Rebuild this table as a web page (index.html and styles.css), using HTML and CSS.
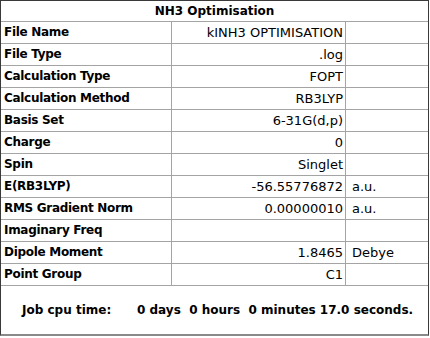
FILE: index.html
```html
<!DOCTYPE html>
<html>
<head>
<meta charset="utf-8">
<link rel="stylesheet" href="styles.css">
</head>
<body>
<div class="panel">
  <div class="title">NH3 Optimisation</div>
  <div class="row"><div class="lbl">File Name</div><div class="val">kINH3 OPTIMISATION</div><div class="unit"></div></div>
  <div class="row"><div class="lbl">File Type</div><div class="val">.log</div><div class="unit"></div></div>
  <div class="row"><div class="lbl">Calculation Type</div><div class="val">FOPT</div><div class="unit"></div></div>
  <div class="row"><div class="lbl">Calculation Method</div><div class="val">RB3LYP</div><div class="unit"></div></div>
  <div class="row"><div class="lbl">Basis Set</div><div class="val">6-31G(d,p)</div><div class="unit"></div></div>
  <div class="row"><div class="lbl">Charge</div><div class="val">0</div><div class="unit"></div></div>
  <div class="row"><div class="lbl">Spin</div><div class="val">Singlet</div><div class="unit"></div></div>
  <div class="row"><div class="lbl">E(RB3LYP)</div><div class="val">-56.55776872</div><div class="unit">a.u.</div></div>
  <div class="row"><div class="lbl">RMS Gradient Norm</div><div class="val">0.00000010</div><div class="unit">a.u.</div></div>
  <div class="row"><div class="lbl">Imaginary Freq</div><div class="val"></div><div class="unit"></div></div>
  <div class="row"><div class="lbl">Dipole Moment</div><div class="val">1.8465</div><div class="unit">Debye</div></div>
  <div class="row"><div class="lbl">Point Group</div><div class="val">C1</div><div class="unit"></div></div>
  <div class="footer"><span class="jlabel">Job cpu time:</span><span class="jval">0 days&nbsp; 0 hours&nbsp; 0 minutes 17.0 seconds.</span></div>
</div>
</body>
</html>
```
FILE: styles.css
```css
html, body {
  margin: 0;
  padding: 0;
  background: #ffffff;
}
body {
  font-family: "DejaVu Sans", "Liberation Sans", sans-serif;
  font-size: 12px;
  color: #000;
}
.panel {
  width: 429px;
  box-sizing: border-box;
  border-top: 1px solid #3a3a3a;
  border-left: 1px solid #3a3a3a;
  border-right: 1px solid #3a3a3a;
  border-bottom: 2px solid #8a8a8a;
  height: 336px;
  display: flex;
  flex-direction: column;
}
.title {
  height: 21px;
  box-sizing: border-box;
  border-bottom: 1px solid #a4a4a4;
  text-align: center;
  font-weight: bold;
  line-height: 20px;
}
.row {
  display: grid;
  grid-template-columns: 171px 174px 1fr;
  height: 22px;
  box-sizing: border-box;
  border-bottom: 1px solid #a4a4a4;
  line-height: 21px;
}
.lbl {
  font-weight: bold;
  letter-spacing: -0.3px;
  padding-left: 3px;
  border-right: 1px solid #a4a4a4;
  white-space: nowrap;
}
.val {
  font-size: 13px;
  text-align: right;
  padding-right: 2px;
  border-right: 1px solid #a4a4a4;
  white-space: nowrap;
}
.unit {
  font-size: 13px;
  padding-left: 6px;
}
.footer {
  flex: 1;
  display: flex;
  align-items: center;
  font-weight: bold;
  padding-left: 21px;
  white-space: pre;
}
.jlabel {
  width: 115px;
}
```
